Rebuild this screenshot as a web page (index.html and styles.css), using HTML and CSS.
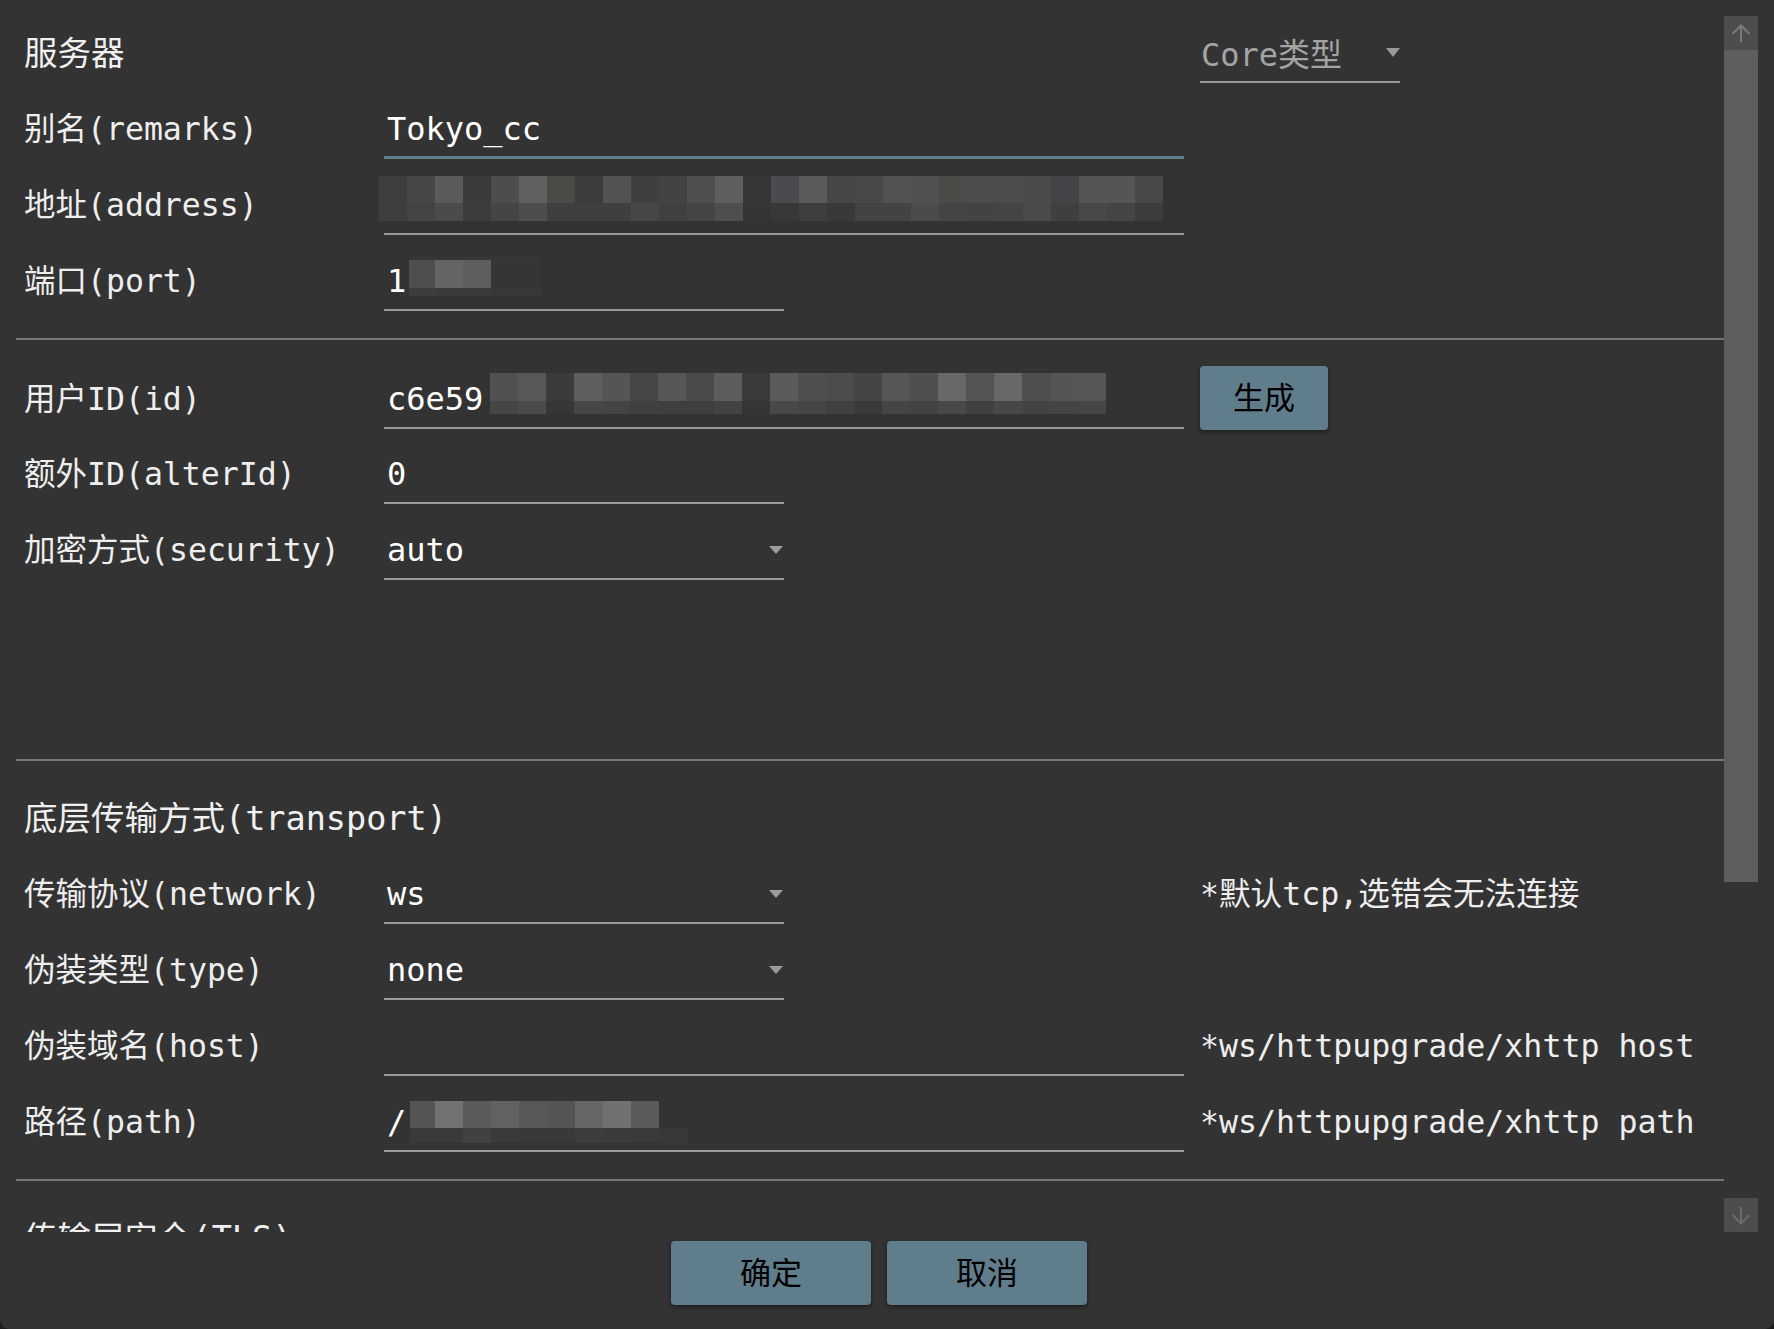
FILE: index.html
```html
<!DOCTYPE html>
<html lang="zh-CN">
<head>
<meta charset="utf-8">
<title>服务器</title>
<link rel="stylesheet" href="styles.css">
</head>
<body>
<div class="window">
  <div class="scroller">
    <div class="content">
      <section class="section sec-server">
        <div class="row head">
          <div class="heading">服务器</div>
          <div class="core-select"><span>Core类型</span><span class="caret caret-lg"></span></div>
        </div>
        <div class="row">
          <div class="label">别名(remarks)</div>
          <div class="field focused"><span class="value">Tokyo_cc</span></div>
        </div>
        <div class="row">
          <div class="label">地址(address)</div>
          <div class="field"><span class="value"></span><div class="mosaic mosaic-address"></div></div>
        </div>
        <div class="row">
          <div class="label">端口(port)</div>
          <div class="field narrow"><span class="value">1</span><div class="mosaic mosaic-port"></div></div>
        </div>
      </section>

      <section class="section sec-user">
        <div class="row">
          <div class="label">用户ID(id)</div>
          <div class="field"><span class="value">c6e59</span><div class="mosaic mosaic-id"></div></div>
          <button class="btn gen-btn">生成</button>
        </div>
        <div class="row">
          <div class="label">额外ID(alterId)</div>
          <div class="field narrow"><span class="value">0</span></div>
        </div>
        <div class="row">
          <div class="label">加密方式(security)</div>
          <div class="field narrow"><span class="value">auto</span><span class="caret"></span></div>
        </div>
      </section>

      <section class="section sec-transport">
        <div class="row head">
          <div class="heading">底层传输方式(transport)</div>
        </div>
        <div class="row">
          <div class="label">传输协议(network)</div>
          <div class="field narrow"><span class="value">ws</span><span class="caret"></span></div>
          <div class="hint">*默认tcp,选错会无法连接</div>
        </div>
        <div class="row">
          <div class="label">伪装类型(type)</div>
          <div class="field narrow"><span class="value">none</span><span class="caret"></span></div>
        </div>
        <div class="row">
          <div class="label">伪装域名(host)</div>
          <div class="field"><span class="value"></span></div>
          <div class="hint">*ws/httpupgrade/xhttp host</div>
        </div>
        <div class="row">
          <div class="label">路径(path)</div>
          <div class="field"><span class="value">/</span><div class="mosaic mosaic-path"></div></div>
          <div class="hint">*ws/httpupgrade/xhttp path</div>
        </div>
      </section>

      <section class="section sec-tls">
        <div class="row head">
          <div class="heading">传输层安全(TLS)</div>
        </div>
      </section>
    </div>

    <div class="scrollbar">
      <div class="sb-btn">
        <svg viewBox="0 0 34 34" width="34" height="34"><path d="M8.5 18 L17 9.5 L25.5 18 M17 10 V26" fill="none" stroke="#7a7a7a" stroke-width="2"/></svg>
      </div>
      <div class="sb-thumb"></div>
      <div class="sb-track"></div>
      <div class="sb-btn">
        <svg viewBox="0 0 34 34" width="34" height="34"><path d="M8.5 17 L17 25.5 L25.5 17 M17 9 V25" fill="none" stroke="#6c6c6c" stroke-width="2"/></svg>
      </div>
    </div>
  </div>

  <div class="footer">
    <button class="btn foot-btn">确定</button>
    <button class="btn foot-btn">取消</button>
  </div>
</div>
</body>
</html>
```
FILE: styles.css
```css
html {
  background: #1c1c1c;
}
body {
  margin: 0;
}
.window {
  width: 1774px;
  height: 1329px;
  background: #333333;
  border-radius: 0 0 9px 9px;
  overflow: hidden;
  display: flex;
  flex-direction: column;
  font-family: "DejaVu Sans Mono", "Noto Sans CJK SC", monospace;
  color: #eeeeee;
}
.scroller {
  height: 1232px;
  flex: none;
  display: flex;
  overflow: hidden;
}
.content {
  flex: 1;
  min-width: 0;
  padding-left: 16px;
  overflow: hidden;
}
.section {
  border-bottom: 2px solid #777777;
  padding-bottom: 27px;
}
.section > * + * {
  margin-top: 20px;
}
.sec-server {
  padding-top: 23px;
}
.sec-user {
  padding-top: 32px;
  padding-bottom: 179px;
}
.sec-transport {
  padding-top: 27px;
}
.sec-tls {
  padding-top: 27px;
  border-bottom: none;
}
.row {
  display: grid;
  grid-template-columns: 352px 800px 1fr;
  column-gap: 16px;
  height: 56px;
  align-items: center;
}
.row.head {
  height: 60px;
}
.heading {
  grid-column: 1 / 3;
  padding-left: 8px;
  padding-bottom: 5px;
  font-size: 33.5px;
  white-space: nowrap;
  color: #f0f0f0;
}
.label {
  padding-left: 8px;
  padding-bottom: 10px;
  font-size: 31.5px;
  white-space: nowrap;
}
.field {
  position: relative;
  height: 56px;
  box-sizing: border-box;
  border-bottom: 2px solid #9a9a9a;
  display: flex;
  align-items: center;
  padding-left: 3px;
  padding-bottom: 2px;
  font-size: 32px;
  color: #ffffff;
  white-space: nowrap;
}
.field.narrow {
  width: 400px;
}
.field.focused {
  border-bottom: 3px solid #607d8b;
}
.caret {
  margin-left: auto;
  margin-right: 1px;
  width: 0;
  height: 0;
  border-left: 7px solid transparent;
  border-right: 7px solid transparent;
  border-top: 8px solid #9a9a9a;
}
.core-select {
  grid-column: 3;
  width: 200px;
  height: 60px;
  box-sizing: border-box;
  border-bottom: 2px solid #9a9a9a;
  display: flex;
  align-items: center;
  padding-left: 1px;
  font-size: 32px;
  color: #a4a4a4;
  white-space: nowrap;
}
.caret-lg {
  margin-right: 0;
  border-left-width: 7.5px;
  border-right-width: 7.5px;
  border-top-width: 9px;
}
.hint {
  grid-column: 3;
  font-size: 31.6px;
  line-height: 37px;
  color: #eeeeee;
  white-space: nowrap;
  padding-bottom: 3px;
}
.btn {
  background: #607d8b;
  border: none;
  border-radius: 4px;
  box-shadow: 0 2px 4px rgba(0, 0, 0, 0.45);
  color: #000000;
  font-family: "Noto Sans CJK SC", sans-serif;
  font-size: 31px;
  padding: 0 0 6px 0;
  margin: 0;
}
.gen-btn {
  grid-column: 3;
  justify-self: start;
  align-self: start;
  margin-top: -6px;
  width: 128px;
  height: 64px;
}
.footer {
  flex: 1;
  display: flex;
  justify-content: center;
  align-items: flex-start;
  gap: 16px;
  padding: 9px 16px 0 0;
}
.foot-btn {
  width: 200px;
  height: 64px;
}
.scrollbar {
  flex: none;
  width: 34px;
  margin: 16px 16px 0 0;
  display: flex;
  flex-direction: column;
}
.sb-btn {
  flex: none;
  height: 34px;
  background: #4d4d4d;
}
.sb-btn svg {
  display: block;
}
.sb-thumb {
  flex: none;
  height: 832px;
  background: #5e5e5e;
}
.sb-track {
  flex: 1;
}

/* redaction mosaics */
.mosaic {
  position: absolute;
}
.mosaic-address {
  left: -5px;
  top: -5px;
  width: 806px;
  height: 47px;
  background:
    linear-gradient(#2f3234, #2f3234) 0 0 / 806px 2px no-repeat,
    linear-gradient(to right,
      #3d3f3f 0 28px, #454847 28px 56px, #5a5a5a 56px 84px, #3a3a3a 84px 112px,
      #4d4d4d 112px 140px, #606060 140px 168px, #4a4a47 168px 196px, #3b3d3c 196px 224px,
      #525252 224px 252px, #3e403f 252px 280px, #434343 280px 308px, #4e4f4f 308px 336px,
      #5e5e5d 336px 364px, #363636 364px 392px, #4a4b4e 392px 420px, #5b5b59 420px 448px,
      #474747 448px 476px, #484848 476px 504px, #525252 504px 532px, #505050 532px 560px,
      #4b4b48 560px 588px, #4d4d4d 588px 616px, #4c4c4c 616px 644px, #4a4a48 644px 672px,
      #434447 672px 700px, #555555 700px 728px, #555555 728px 756px, #4a4847 756px 784px
    ) 0 2px / 784px 27px no-repeat,
    linear-gradient(to right,
      #3d3e3e 0 28px, #434444 28px 56px, #4b4b4b 56px 84px, #3c3c3c 84px 112px,
      #454545 112px 140px, #4d4d4d 140px 168px, #3f3f3e 168px 196px, #3e3f3e 196px 224px,
      #3f3f3f 224px 252px, #474747 252px 280px, #404040 280px 308px, #454545 308px 336px,
      #4e4e4e 336px 364px, #363433 364px 392px, #373839 392px 420px, #3e3e3d 420px 448px,
      #393939 448px 476px, #434343 476px 504px, #434343 504px 532px, #4a4b4b 532px 560px,
      #444444 560px 588px, #434343 588px 616px, #444444 616px 644px, #4a4a4a 644px 672px,
      #3f3f3f 672px 700px, #484848 700px 728px, #444444 728px 756px, #3c3c3c 756px 784px
    ) 0 29px / 784px 18px no-repeat;
}
.mosaic-port {
  left: 25px;
  top: 2px;
  width: 132px;
  height: 39px;
  background:
    linear-gradient(#373737, #373737) 0 0 / 132px 3px no-repeat,
    linear-gradient(to right,
      #4e4e4e 0 26px, #636465 26px 54px, #5f5e5c 54px 82px, #353535 82px 132px
    ) 0 3px / 132px 28px no-repeat,
    linear-gradient(to right,
      #3d3d3d 0 26px, #3a3a3a 26px 54px, #3b3b3b 54px 82px, #383838 82px 132px
    ) 0 31px / 132px 8px no-repeat;
}
.mosaic-id {
  left: 106px;
  top: 0;
  width: 616px;
  height: 41px;
  background:
    linear-gradient(to right,
      #505252 0 28px, #575859 28px 56px, #3c3b3a 56px 84px, #5d5e60 84px 112px,
      #555553 112px 140px, #464646 140px 168px, #565656 168px 196px, #4a4a4a 196px 224px,
      #5c5d5e 224px 252px, #3b393a 252px 280px, #5b5b5b 280px 308px, #4f4f4f 308px 336px,
      #4b4c4c 336px 364px, #444547 364px 392px, #575555 392px 420px, #4f4f4f 420px 448px,
      #676869 448px 476px, #545453 476px 504px, #686868 504px 532px, #4f4e4d 532px 560px,
      #555555 560px 588px, #565656 588px 616px
    ) 0 0 / 616px 28px no-repeat,
    linear-gradient(to right,
      #444646 0 28px, #4a4b4b 28px 56px, #363636 56px 84px, #464646 84px 112px,
      #444444 112px 140px, #404040 140px 168px, #3e3e3e 168px 196px, #3e3e3e 196px 224px,
      #424344 224px 252px, #353535 252px 280px, #474848 280px 308px, #454545 308px 336px,
      #404040 336px 364px, #3a3a3b 364px 392px, #454545 392px 420px, #434343 420px 448px,
      #484848 448px 476px, #404040 476px 504px, #474747 504px 532px, #434343 532px 560px,
      #444444 560px 588px, #464646 588px 616px
    ) 0 28px / 616px 13px no-repeat;
}
.mosaic-path {
  left: 26px;
  top: 5px;
  width: 278px;
  height: 42px;
  background:
    linear-gradient(to right,
      #535456 0 25px, #727272 25px 53px, #5c5b59 53px 81px, #626262 81px 109px,
      #585858 109px 137px, #545454 137px 165px, #666666 165px 193px, #72716f 193px 221px,
      #5a5a5a 221px 249px
    ) 0 0 / 249px 27px no-repeat,
    linear-gradient(to right,
      #3a3a3a 0 25px, #3a3a3a 25px 53px, #414141 53px 81px, #3a3a3a 81px 109px,
      #393939 109px 137px, #393939 137px 165px, #3d3d3d 165px 193px, #3b3b3b 193px 221px,
      #3a3a3a 221px 249px, #383838 249px 278px
    ) 0 27px / 278px 15px no-repeat;
}
```
